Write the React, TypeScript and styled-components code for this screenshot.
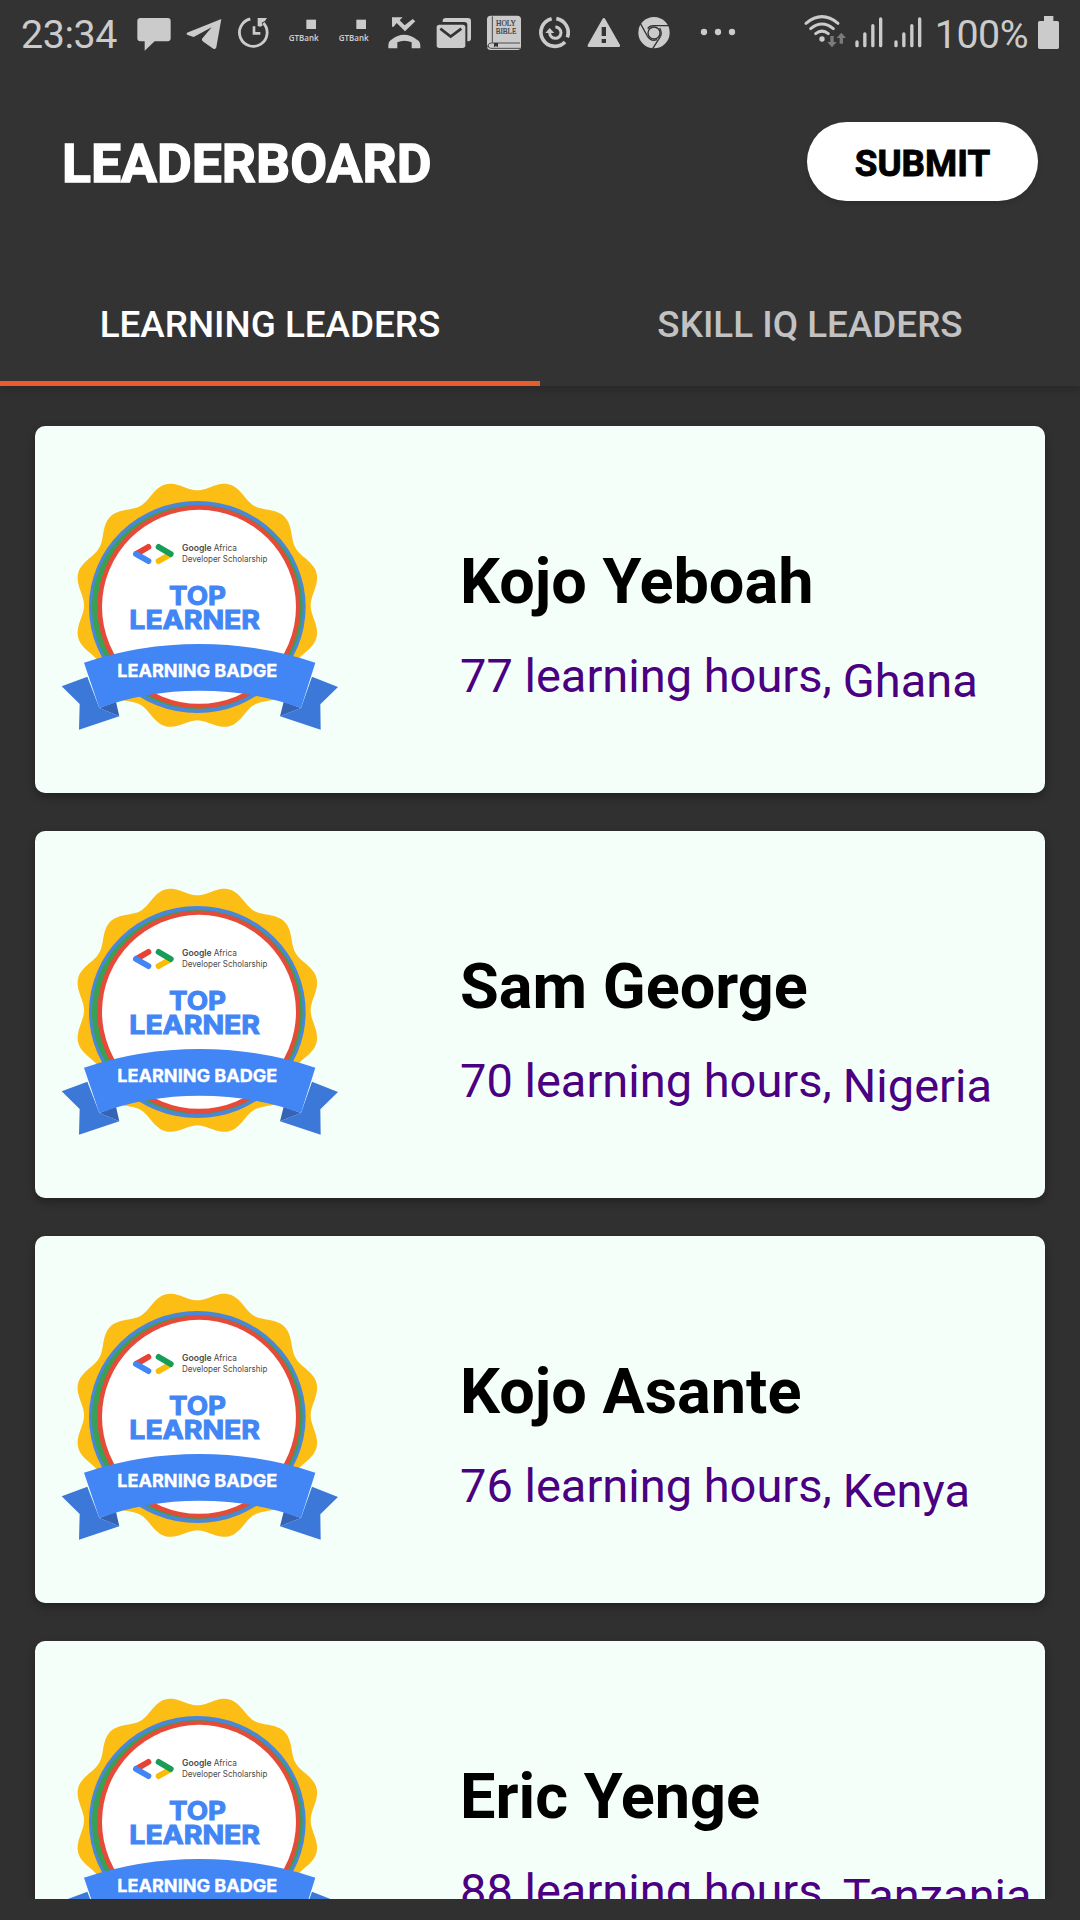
import React from "react";
import styled, { createGlobalStyle } from "styled-components";

const GlobalStyle = createGlobalStyle`
  * { box-sizing: border-box; }
  html, body { margin: 0; padding: 0; background: #303030; }
  body { font-family: Roboto, "Liberation Sans", sans-serif; }
`;

const Screen = styled.div`
  width: 1080px;
  height: 1920px;
  display: flex;
  flex-direction: column;
  overflow: hidden;
  background: #303030;
  padding-bottom: 21px;
`;

const Header = styled.header`
  flex: none;
  height: 386px;
  display: flex;
  flex-direction: column;
  background: #333333;
  box-shadow: 0 2px 9px rgba(0, 0, 0, 0.22);
  z-index: 1;
`;

const StatusBar = styled.div`
  height: 70px;
  display: flex;
  align-items: flex-start;
`;

const StatusText = styled.span<{ $width: number; $pad: number }>`
  flex: none;
  width: ${(p) => p.$width}px;
  padding-left: ${(p) => p.$pad}px;
  font-size: 39.4px;
  letter-spacing: -0.4px;
  line-height: 69px;
  color: #cbcbcb;
  white-space: nowrap;
`;

const Glyph = styled.svg`
  flex: none;
  display: block;
  height: 70px;
  fill: #cbcbcb;
`;

const Toolbar = styled.div`
  height: 183px;
  display: flex;
  align-items: center;
  justify-content: space-between;
  padding: 0 42px 0 62px;
`;

const Title = styled.h1`
  margin: 0;
  padding-top: 5px;
  font-size: 53.5px;
  font-weight: 700;
  line-height: 62px;
  color: #ffffff;
  -webkit-text-stroke: 1.3px #ffffff;
`;

const SubmitButton = styled.button`
  width: 231px;
  height: 79px;
  padding: 4px 0 0;
  border: 0;
  border-radius: 40px;
  background: #ffffff;
  color: #000000;
  font-family: inherit;
  font-size: 36.75px;
  font-weight: 700;
  -webkit-text-stroke: 0.9px #000000;
  box-shadow: 0 3px 5px rgba(0, 0, 0, 0.12);
`;

const Tabs = styled.nav`
  height: 133px;
  display: grid;
  grid-template-columns: 1fr 1fr;
`;

const Tab = styled.div<{ $active?: boolean }>`
  display: flex;
  align-items: center;
  justify-content: center;
  padding-top: 14px;
  border-bottom: 5px solid ${(p) => (p.$active ? "#e95b2c" : "transparent")};
  font-size: 36.85px;
  font-weight: 500;
  color: ${(p) => (p.$active ? "#ffffff" : "#c2c2c2")};
`;

const List = styled.main`
  flex: 1;
  min-height: 0;
  overflow: hidden;
  display: flex;
  flex-direction: column;
  gap: 38px;
  padding: 40px 35px 0;
`;

const Card = styled.article`
  flex: none;
  height: 367px;
  display: flex;
  align-items: flex-start;
  padding: 34px 0 0 5px;
  border-radius: 10px;
  background: #f5fffa;
  box-shadow: 0 4px 9px rgba(0, 0, 0, 0.3);
`;

const BadgeArt = styled.svg`
  flex: none;
  display: block;
  width: 320px;
  height: 290px;
`;

const Info = styled.div`
  padding: 85px 0 0 100px;
`;

const Name = styled.h2`
  margin: 0;
  font-size: 63px;
  font-weight: 700;
  line-height: 74px;
  color: #000000;
  white-space: nowrap;
`;

const Details = styled.div`
  display: flex;
  gap: 11px;
  padding-top: 29px;
  font-size: 47px;
  line-height: 56px;
  color: #4b0082;
  white-space: nowrap;
`;

const Country = styled.span`
  padding-top: 5px;
`;

// Icons are drawn on a grid of three units per pixel, 210 units tall.
function Icon({ x, w, children }: { x: number; w: number; children?: React.ReactNode }) {
  return (
    <Glyph viewBox={`${x} 0 ${w} 210`} width={w / 3}>
      {children}
    </Glyph>
  );
}

const line = { fill: "none", stroke: "#cbcbcb" };
const DARK = "#333333";

function GTBankIcon({ w }: { w: number }) {
  return (
    <Icon x={840} w={w}>
      <rect x="919" y="59" width="29" height="28" />
      <text x="866" y="124" fontSize="25" fontWeight="600" fontFamily="'Noto Sans', sans-serif" textLength="90" lengthAdjust="spacingAndGlyphs">
        GTBank
      </text>
    </Icon>
  );
}

function SignalIcon() {
  return (
    <Icon x={275} w={117}>
      <path {...line} strokeWidth="10" strokeLinecap="round" d="M290 126V137M313.500 102V137M337.500 77V137M361 57V137" />
    </Icon>
  );
}

function Status() {
  return (
    <StatusBar>
      <StatusText $width={130} $pad={21}>23:34</StatusText>
      <Icon x={390} w={150}>
        <path d="M421 54H503Q512 54 512 63V115Q512 124 503 124H464L434 152V124H421Q412 124 412 115V63Q412 54 421 54Z" />
      </Icon>
      <Icon x={540} w={150}>
        <path d="M664 57L561 98Q557 102 563 105L581 111L635 82L606 116Q604 121 610 125L640 146Q647 149 649 142Z" />
      </Icon>
      <Icon x={690} w={150}>
        <path {...line} strokeWidth="8.500" d="M751 57A41.500 41.500 0 1 0 790 69" />
        <path d="M773 54H801L795 63L785 68L788 77L780 80L773 78Z" />
        <path {...line} strokeWidth="8" d="M762 79V100H781" />
      </Icon>
      <GTBankIcon w={150} />
      <GTBankIcon w={140} />
      <Icon x={50} w={160}>
        <path d="M95 52H127L118 61L133 76L157 57L165 64L134 94L109 69L100 80H95Z" />
        <path d="M84 137Q84 124 93 119Q131 90 170 119Q180 124 180 137V145H154V127Q132 118 111 127V145H84Z" />
      </Icon>
      <Icon x={210} w={150}>
        <path d="M248 66V62Q248 54 257 54H324Q333 54 333 63V115Q333 124 325 124H322V74Q322 66 313 66Z" />
        <rect x="230" y="74" width="86" height="70" rx="8" />
        <path d="M241 86L272 110L304 86" fill="none" stroke={DARK} strokeWidth="8" />
      </Icon>
      <Icon x={360} w={150}>
        <rect x="381" y="47" width="102" height="103" rx="11" />
        <path d="M397 49V128M383 142Q383 129 395 129H480M480 145H392Q383 143 385 136" fill="none" stroke={DARK} strokeWidth="2.500" />
        <path d="M402 129H414V142L408 138L402 142Z" fill={DARK} />
        <g fill={DARK} fontFamily="'Liberation Serif', serif" fontSize="23" stroke={DARK} strokeWidth="0.500">
          <text x="408" y="77" textLength="60" lengthAdjust="spacingAndGlyphs">HOLY</text>
          <text x="407" y="101" textLength="62" lengthAdjust="spacingAndGlyphs">BIBLE</text>
        </g>
      </Icon>
      <Icon x={510} w={150}>
        <path {...line} strokeWidth="11" d="M575 56A42 42 0 1 0 615 126" />
        <path {...line} strokeWidth="11" d="M589 56A42 42 0 0 1 622 112" />
        <path {...line} strokeWidth="9" d="M586 81A17 17 0 1 1 569 97" />
        <path d="M556 99L569 84L583 99Z" />
      </Icon>
      <Icon x={660} w={150}>
        <path d="M731 54Q734 54 736 58L780 135Q782 141 776 141H687Q681 141 683 135L727 58Q729 54 731 54Z" />
        <path d="M725 81H738V108H725ZM725 117H738V129H725Z" fill={DARK} />
      </Icon>
      <Icon x={810} w={150}>
        <circle cx="882" cy="98" r="47" />
        <g fill="none" stroke={DARK} strokeWidth="4">
          <circle cx="882" cy="99" r="18" />
          <path d="M882 77H926M862 108L841 70M901 110L878 146" />
          <path d="M863 86Q870 76 882 77M901 110Q907 98 899 84M862 108Q869 121 882 121L891 119" />
        </g>
      </Icon>
      <Icon x={960} w={310}>
        <circle cx="1032" cy="96" r="9.500" />
        <circle cx="1074" cy="96" r="9.500" />
        <circle cx="1116" cy="96" r="9.500" />
      </Icon>
      <Icon x={70} w={205}>
        <path {...line} strokeWidth="9" strokeLinecap="round" d="M139 70Q187 30 235 70M153 86Q187 58 221 86M168 101Q187 86 206 101" />
        <circle cx="187" cy="117" r="8" />
        <path fill="#7b7b7b" d="M212 108H222V126H231L217 142L203 126H212ZM240 131H250V114H259L245 98L231 114H240Z" />
      </Icon>
      <SignalIcon />
      <SignalIcon />
      <StatusText $width={102.3} $pad={5}>100%</StatusText>
      <Icon x={816} w={90}>
        <path d="M852 48H880V63H892Q897 63 897 68V142Q897 147 892 147H839Q834 147 834 142V68Q834 63 839 63H852Z" />
      </Icon>
    </StatusBar>
  );
}

// Twelve-lobed rosette outline traced in polar form.
const rosette =
  "M" +
  Array.from({ length: 360 }, (_, i) => {
    const t = (i * Math.PI) / 180;
    const r = 355 - 15 * Math.cos(12 * t);
    return `${(472 + r * Math.cos(t)).toFixed(1)} ${(436 + 1.015 * r * Math.sin(t)).toFixed(1)}`;
  }).join("L") +
  "Z";

function Badge() {
  return (
    <BadgeArt viewBox="0 0 960 870">
      <path d={rosette} fill="#fcbd14" />
      <ellipse cx="472" cy="441" rx="325" ry="318" fill="#4a86d9" />
      <ellipse cx="472" cy="441" rx="316" ry="306" fill="#3aa052" />
      <circle cx="476.5" cy="441" r="304.5" fill="#e64a38" />
      <circle cx="477" cy="440.5" r="291" fill="#ffffff" />
      <g fill="none" strokeWidth="18" strokeLinecap="round">
        <path stroke="#e64335" d="M325 261L292 280" />
        <path stroke="#fbbc05" d="M356 303L388 285" />
        <path stroke="#4285f4" d="M288 282L325 303" />
        <path stroke="#189d58" d="M356 261L392 282" />
      </g>
      <g fontFamily="Inter, sans-serif">
        <g fill="#4a4a4a" fontSize="26">
          <text x="426" y="273" fontWeight="600" textLength="89" lengthAdjust="spacingAndGlyphs">Google</text>
          <text x="521" y="273" textLength="70" lengthAdjust="spacingAndGlyphs">Africa</text>
          <text x="426" y="305" textLength="256" lengthAdjust="spacingAndGlyphs">Developer Scholarship</text>
        </g>
        <g fill="#4285f4" stroke="#4285f4" strokeWidth="3" fontWeight="700" fontSize="77">
          <text x="387" y="434" textLength="171" lengthAdjust="spacingAndGlyphs">TOP</text>
          <text x="268" y="506" textLength="392" lengthAdjust="spacingAndGlyphs">LEARNER</text>
        </g>
      </g>
      <path fill="#3c78d8" d="M65 679L142 650L178 744L238 769L117 809L119 732Z" />
      <path fill="#3c78d8" d="M894 681L816 650L783 744L720 769L842 809L841 733Z" />
      <path fill="#3564b6" d="M178 744L228 725L238 769ZM783 744L731 725L720 769Z" />
      <path fill="#4285f4" d="M132 608Q300 552 478 552Q658 552 826 608L783 744Q640 692 478 692Q320 692 178 744Z" />
      <text x="232" y="652" fill="#ffffff" stroke="#ffffff" strokeWidth="1" fontFamily="Inter, sans-serif" fontWeight="700" fontSize="52" textLength="480" lengthAdjust="spacingAndGlyphs">
        LEARNING BADGE
      </text>
    </BadgeArt>
  );
}

const leaders = [
  { name: "Kojo Yeboah", hours: 77, country: "Ghana" },
  { name: "Sam George", hours: 70, country: "Nigeria" },
  { name: "Kojo Asante", hours: 76, country: "Kenya" },
  { name: "Eric Yenge", hours: 88, country: "Tanzania" },
];

export default function App() {
  return (
    <>
      <GlobalStyle />
      <Screen>
        <Header>
          <Status />
          <Toolbar>
            <Title>LEADERBOARD</Title>
            <SubmitButton>SUBMIT</SubmitButton>
          </Toolbar>
          <Tabs>
            <Tab $active>LEARNING LEADERS</Tab>
            <Tab>SKILL IQ LEADERS</Tab>
          </Tabs>
        </Header>
        <List>
          {leaders.map((l) => (
            <Card key={l.name}>
              <Badge />
              <Info>
                <Name>{l.name}</Name>
                <Details>
                  <span>{l.hours} learning hours,</span>
                  <Country>{l.country}</Country>
                </Details>
              </Info>
            </Card>
          ))}
        </List>
      </Screen>
    </>
  );
}
